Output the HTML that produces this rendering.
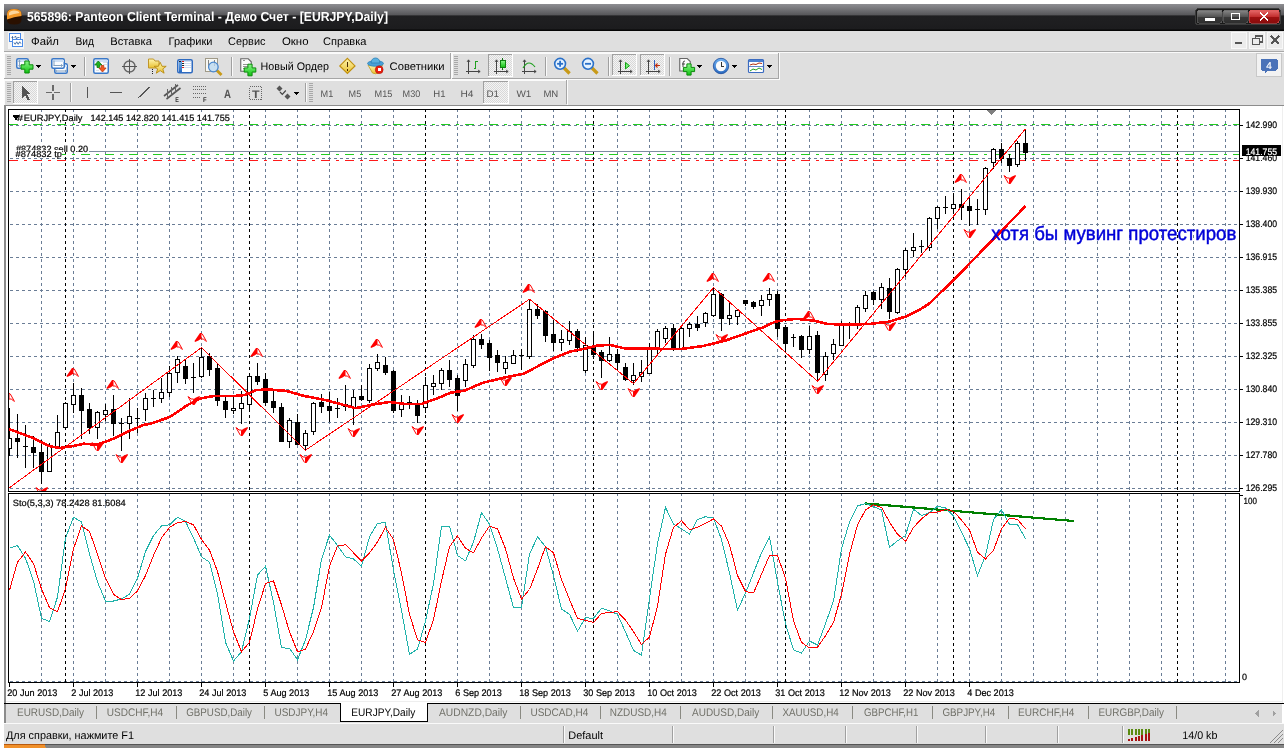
<!DOCTYPE html>
<html><head><meta charset="utf-8"><style>
html,body{margin:0;padding:0;background:#fff;width:1288px;height:748px;overflow:hidden}
svg{display:block;font-family:"Liberation Sans", sans-serif;will-change:transform}
</style></head><body>
<svg width="1288" height="748" viewBox="0 0 1288 748" shape-rendering="crispEdges" text-rendering="geometricPrecision">
<defs><linearGradient id="tg" x1="0" y1="0" x2="0" y2="1"><stop offset="0" stop-color="#8e8e92"/><stop offset="0.42" stop-color="#555558"/><stop offset="0.43" stop-color="#202022"/><stop offset="0.93" stop-color="#1c1c1e"/><stop offset="0.96" stop-color="#050505"/><stop offset="1" stop-color="#050505"/></linearGradient><linearGradient id="bg1" x1="0" y1="0" x2="0" y2="1"><stop offset="0" stop-color="#8a8a8a"/><stop offset="0.5" stop-color="#555"/><stop offset="0.52" stop-color="#3a3a3a"/><stop offset="1" stop-color="#2e2e2e"/></linearGradient><linearGradient id="bgr" x1="0" y1="0" x2="0" y2="1"><stop offset="0" stop-color="#e86b6b"/><stop offset="0.5" stop-color="#c43030"/><stop offset="0.52" stop-color="#a01010"/><stop offset="1" stop-color="#8a0c0c"/></linearGradient><linearGradient id="og" x1="0" y1="0" x2="0" y2="1"><stop offset="0" stop-color="#ffd08a"/><stop offset="0.55" stop-color="#f08a10"/><stop offset="0.56" stop-color="#3a1a00"/><stop offset="1" stop-color="#1a0a00"/></linearGradient><pattern id="chk" width="2" height="2" patternUnits="userSpaceOnUse"><rect width="2" height="2" fill="#f4f4f4"/><rect width="1" height="1" fill="#d8d8d8"/><rect x="1" y="1" width="1" height="1" fill="#d8d8d8"/></pattern></defs>
<rect x="4" y="4" width="1280" height="27" fill="url(#tg)" />
<g shape-rendering="auto"><path d="M7 14 Q7 9 14 9 Q21.5 9 21.5 14 V20 Q21.5 24.5 14 24.5 Q7 24.5 7 20 z" fill="#2a1000"/><path d="M7 14 Q7 9 14 9 Q21.5 9 21.5 14 V16 Q14 16.5 7 19.5 z" fill="#f59a2a"/><path d="M9 13 Q10 10.5 14 10.5 Q19 10.5 19.5 13 Q14 13.8 9 15.5 z" fill="#ffe0b0" opacity="0.85"/></g>
<text x="27" y="21" font-size="13" fill="#fff" textLength="361" lengthAdjust="spacingAndGlyphs" font-weight="bold" >565896: Panteon Client Terminal - Демо Счет - [EURJPY,Daily]</text>
<rect x="1195.5" y="8.5" width="85" height="16" rx="3" fill="#1a1a1a" stroke="#3c3c3c"/>
<rect x="1197" y="10" width="25" height="13" rx="2" fill="url(#bg1)" stroke="#666" stroke-width="0.6"/>
<rect x="1223" y="10" width="25" height="13" rx="2" fill="url(#bg1)" stroke="#666" stroke-width="0.6"/>
<rect x="1249" y="10" width="30" height="13" rx="2" fill="url(#bgr)" stroke="#d55" stroke-width="0.6"/>
<rect x="1205" y="18" width="10" height="2.5" fill="#fff" />
<rect x="1231.5" y="13.5" width="8" height="6" fill="none" stroke="#fff" stroke-width="1.6"/>
<path d="M1260 12.5 L1268 20.5 M1268 12.5 L1260 20.5" stroke="#fff" stroke-width="2"/>
<rect x="4" y="31" width="1280" height="20" fill="#dfdfdf" />
<rect x="8" y="32" width="16" height="17" fill="#f5f5f5" />
<rect x="9.5" y="33.5" width="11" height="8" fill="#fff" stroke="#4a8ae8" stroke-width="1"/><path d="M11.5 37.5 h2 M12.5 36 v3 M14.5 37.5 l1 -1.5 l1 3 l1 -1.5 h2" stroke="#3060a0" fill="none" stroke-width="0.8" shape-rendering="auto"/><rect x="12.5" y="39.5" width="10" height="7" fill="#fff" stroke="#4a8ae8" stroke-width="1"/><path d="M14 42.5 l1.2 1.8 l1.5 -2.5 l1.5 2.5 l1.5 -2.5 l1.2 1.8" stroke="#3060a0" fill="none" stroke-width="0.9" shape-rendering="auto"/>
<text x="31" y="45" font-size="11" fill="#000" textLength="28" lengthAdjust="spacingAndGlyphs" >Файл</text>
<text x="75.5" y="45" font-size="11" fill="#000" textLength="18.5" lengthAdjust="spacingAndGlyphs" >Вид</text>
<text x="110.3" y="45" font-size="11" fill="#000" textLength="41.6" lengthAdjust="spacingAndGlyphs" >Вставка</text>
<text x="168.6" y="45" font-size="11" fill="#000" textLength="43.8" lengthAdjust="spacingAndGlyphs" >Графики</text>
<text x="228" y="45" font-size="11" fill="#000" textLength="37.5" lengthAdjust="spacingAndGlyphs" >Сервис</text>
<text x="282" y="45" font-size="11" fill="#000" textLength="26.5" lengthAdjust="spacingAndGlyphs" >Окно</text>
<text x="323" y="45" font-size="11" fill="#000" textLength="43.5" lengthAdjust="spacingAndGlyphs" >Справка</text>
<rect x="1231" y="32" width="16" height="17" fill="#ececec" />
<rect x="1231.5" y="32.5" width="15" height="16" fill="none" stroke="#f8f8f8"/>
<rect x="1249" y="32" width="16" height="17" fill="#ececec" />
<rect x="1249.5" y="32.5" width="15" height="16" fill="none" stroke="#f8f8f8"/>
<rect x="1267" y="32" width="16" height="17" fill="#ececec" />
<rect x="1267.5" y="32.5" width="15" height="16" fill="none" stroke="#f8f8f8"/>
<rect x="1235" y="42" width="7" height="2" fill="#555" />
<rect x="1252.5" y="38.5" width="7" height="6" fill="none" stroke="#555" stroke-width="1.3"/><path d="M1255.5 38.5 v-2.5 h7 v6 h-2.5" fill="none" stroke="#555" stroke-width="1.3"/>
<path d="M1271 36 L1279 44 M1279 36 L1271 44" stroke="#555" stroke-width="2"/>
<line x1="4" y1="51.5" x2="1284" y2="51.5" stroke="#a8a8a8" stroke-width="1" />
<line x1="4" y1="52.5" x2="1284" y2="52.5" stroke="#fafafa" stroke-width="1" />
<rect x="4" y="53" width="1280" height="52" fill="#dfdfdf" />
<rect x="4" y="53" width="448" height="27" fill="#dfdfdf" />
<line x1="4" y1="53.5" x2="452" y2="53.5" stroke="#fbfbfb" stroke-width="1" />
<line x1="4.5" y1="53" x2="4.5" y2="80" stroke="#fbfbfb" stroke-width="1" />
<line x1="4" y1="78.5" x2="452" y2="78.5" stroke="#a6a6a6" stroke-width="1" />
<line x1="4" y1="79.5" x2="452" y2="79.5" stroke="#fbfbfb" stroke-width="1" />
<line x1="450.5" y1="53" x2="450.5" y2="79" stroke="#a6a6a6" stroke-width="1" />
<line x1="451.5" y1="53" x2="451.5" y2="80" stroke="#fbfbfb" stroke-width="1" />
<rect x="452" y="53" width="328" height="27" fill="#dfdfdf" />
<line x1="452" y1="53.5" x2="780" y2="53.5" stroke="#fbfbfb" stroke-width="1" />
<line x1="452.5" y1="53" x2="452.5" y2="80" stroke="#fbfbfb" stroke-width="1" />
<line x1="452" y1="78.5" x2="780" y2="78.5" stroke="#a6a6a6" stroke-width="1" />
<line x1="452" y1="79.5" x2="780" y2="79.5" stroke="#fbfbfb" stroke-width="1" />
<line x1="778.5" y1="53" x2="778.5" y2="79" stroke="#a6a6a6" stroke-width="1" />
<line x1="779.5" y1="53" x2="779.5" y2="80" stroke="#fbfbfb" stroke-width="1" />
<rect x="4" y="80" width="564" height="25" fill="#dfdfdf" />
<line x1="4" y1="80.5" x2="568" y2="80.5" stroke="#fbfbfb" stroke-width="1" />
<line x1="4.5" y1="80" x2="4.5" y2="105" stroke="#fbfbfb" stroke-width="1" />
<line x1="566.5" y1="80" x2="566.5" y2="104" stroke="#a6a6a6" stroke-width="1" />
<line x1="567.5" y1="80" x2="567.5" y2="105" stroke="#fbfbfb" stroke-width="1" />
<rect x="7" y="56" width="4" height="1" fill="#a8a8a8" />
<rect x="7" y="58" width="4" height="1" fill="#a8a8a8" />
<rect x="7" y="60" width="4" height="1" fill="#a8a8a8" />
<rect x="7" y="62" width="4" height="1" fill="#a8a8a8" />
<rect x="7" y="64" width="4" height="1" fill="#a8a8a8" />
<rect x="7" y="66" width="4" height="1" fill="#a8a8a8" />
<rect x="7" y="68" width="4" height="1" fill="#a8a8a8" />
<rect x="7" y="70" width="4" height="1" fill="#a8a8a8" />
<rect x="7" y="72" width="4" height="1" fill="#a8a8a8" />
<rect x="7" y="74" width="4" height="1" fill="#a8a8a8" />
<rect x="454" y="56" width="4" height="1" fill="#a8a8a8" />
<rect x="454" y="58" width="4" height="1" fill="#a8a8a8" />
<rect x="454" y="60" width="4" height="1" fill="#a8a8a8" />
<rect x="454" y="62" width="4" height="1" fill="#a8a8a8" />
<rect x="454" y="64" width="4" height="1" fill="#a8a8a8" />
<rect x="454" y="66" width="4" height="1" fill="#a8a8a8" />
<rect x="454" y="68" width="4" height="1" fill="#a8a8a8" />
<rect x="454" y="70" width="4" height="1" fill="#a8a8a8" />
<rect x="454" y="72" width="4" height="1" fill="#a8a8a8" />
<rect x="454" y="74" width="4" height="1" fill="#a8a8a8" />
<rect x="7" y="83" width="4" height="1" fill="#a8a8a8" />
<rect x="7" y="85" width="4" height="1" fill="#a8a8a8" />
<rect x="7" y="87" width="4" height="1" fill="#a8a8a8" />
<rect x="7" y="89" width="4" height="1" fill="#a8a8a8" />
<rect x="7" y="91" width="4" height="1" fill="#a8a8a8" />
<rect x="7" y="93" width="4" height="1" fill="#a8a8a8" />
<rect x="7" y="95" width="4" height="1" fill="#a8a8a8" />
<rect x="7" y="97" width="4" height="1" fill="#a8a8a8" />
<rect x="7" y="99" width="4" height="1" fill="#a8a8a8" />
<rect x="7" y="101" width="4" height="1" fill="#a8a8a8" />
<rect x="309" y="83" width="4" height="1" fill="#a8a8a8" />
<rect x="309" y="85" width="4" height="1" fill="#a8a8a8" />
<rect x="309" y="87" width="4" height="1" fill="#a8a8a8" />
<rect x="309" y="89" width="4" height="1" fill="#a8a8a8" />
<rect x="309" y="91" width="4" height="1" fill="#a8a8a8" />
<rect x="309" y="93" width="4" height="1" fill="#a8a8a8" />
<rect x="309" y="95" width="4" height="1" fill="#a8a8a8" />
<rect x="309" y="97" width="4" height="1" fill="#a8a8a8" />
<rect x="309" y="99" width="4" height="1" fill="#a8a8a8" />
<rect x="309" y="101" width="4" height="1" fill="#a8a8a8" />
<defs><linearGradient id="gy" x1="0" y1="0" x2="0" y2="1"><stop offset="0" stop-color="#fff6b0"/><stop offset="1" stop-color="#e8c030"/></linearGradient><linearGradient id="gb" x1="0" y1="0" x2="0" y2="1"><stop offset="0" stop-color="#6fb0f0"/><stop offset="1" stop-color="#2a6ac0"/></linearGradient><linearGradient id="gg" x1="0" y1="0" x2="0" y2="1"><stop offset="0" stop-color="#8af88a"/><stop offset="1" stop-color="#10c010"/></linearGradient></defs>
<rect x="16.75" y="58.75" width="11.5" height="9.5" rx="1.5" fill="#fafcff" stroke="#3a78c8" stroke-width="1.5" shape-rendering="auto"/><rect x="17.5" y="59.5" width="10" height="2" fill="#cfe0f6"/>
<path d="M19.5 60.5 v6 M18.3 61.5 l1.2 -1.2 l1.2 1.2 M18.3 65.5 l1.2 1.2 l1.2 -1.2" stroke="#7a98b8" fill="none" stroke-width="0.9" shape-rendering="auto"/>
<path d="M24.8 61h4.4v3.8h3.8v4.4h-3.8v3.8h-4.4v-3.8h-3.8v-4.4h3.8z" fill="url(#gg)" stroke="#0a8a0a" stroke-width="1" shape-rendering="auto"/>
<path d="M36 65 h5 l-2.5 3 z" fill="#000"/>
<rect x="54.75" y="63.75" width="12.5" height="9.5" rx="1.5" fill="#fafcff" stroke="#3a78c8" stroke-width="1.5" shape-rendering="auto"/><rect x="55.5" y="64.5" width="11" height="2" fill="#cfe0f6"/>
<rect x="51.75" y="58.75" width="12.5" height="9.5" rx="1.5" fill="#fafcff" stroke="#3a78c8" stroke-width="1.5" shape-rendering="auto"/><rect x="52.5" y="59.5" width="11" height="2" fill="#cfe0f6"/>
<path d="M54 60.5 v5 M53.5 65.5 h9 M61 64.3 l1.5 1.2 l-1.5 1.2 M57 71 h9 M57 70 l-1.5 1 l1.5 1 M65 70 l1.5 1 l-1.5 1" stroke="#7a98b8" fill="none" stroke-width="0.9" shape-rendering="auto"/>
<path d="M71 65 h5 l-2.5 3 z" fill="#000"/>
<line x1="84.5" y1="57" x2="84.5" y2="76" stroke="#a0a0a0" stroke-width="1" />
<line x1="85.5" y1="57" x2="85.5" y2="76" stroke="#fafafa" stroke-width="1" />
<rect x="93.75" y="58.75" width="14.5" height="14.5" rx="1.5" fill="#fafcff" stroke="#3a78c8" stroke-width="1.5" shape-rendering="auto"/><rect x="94.5" y="59.5" width="13" height="2" fill="#cfe0f6"/>
<path d="M98.3 61 l-3.6 4 h2.3 v2.5 h2.6 v-2.5 h2.3 z" fill="#20b020" stroke="#0a7a0a" stroke-width="0.8" shape-rendering="auto"/><path d="M102.5 72 l3.6 -4 h-2.3 v-2.5 h-2.6 v2.5 h-2.3 z" fill="#f05a20" stroke="#c03a10" stroke-width="0.8" shape-rendering="auto"/><path d="M103 62 h4 M103 64 h4 M96 70 h3" stroke="#d0d8e0" stroke-width="0.8"/>
<circle cx="129.5" cy="66.5" r="5.5" fill="none" stroke="#666" stroke-width="1.4" shape-rendering="auto"/><path d="M129.5 59 v15 M122 66.5 h15" stroke="#555" stroke-width="1.1"/>
<path d="M148.5 59 h5 l1.5 2 h4 v7 h-10.5 z" fill="url(#gy)" stroke="#c0962a" stroke-width="1" shape-rendering="auto"/><path d="M160.2 62.3 l1.8 4 h4.2 l-3.4 2.6 l1.3 4.3 l-3.9 -2.6 l-3.9 2.6 l1.3 -4.3 l-3.4 -2.6 h4.2 z" fill="url(#gy)" stroke="#b88a10" stroke-width="0.9" shape-rendering="auto"/><path d="M152.5 69 v5" stroke="#222" stroke-width="1" stroke-dasharray="1 1"/>
<rect x="177.75" y="59.75" width="14.5" height="13" rx="1.5" fill="#fff" stroke="#2e6ac0" stroke-width="1.5" shape-rendering="auto"/><rect x="178.5" y="60.5" width="3" height="11.5" fill="url(#gb)"/><path d="M183 61.5 h8 M183 63.5 h8 M183 65.5 h8 M183 67.5 h8" stroke="#c0d4f0" stroke-width="0.8"/><path d="M182 61.5 h1.5 M182 67.5 h1.5" stroke="#e02020" stroke-width="1.2"/><path d="M182 63.5 h1.5 M182 65.5 h1.5 M179 61.5 h1.5" stroke="#222" stroke-width="1.2"/>
<rect x="205.5" y="58.5" width="12" height="13" fill="#f8f8f4" stroke="#a09a88"/><path d="M208 60 v8 M214.5 60 v6" stroke="#777" stroke-width="0.9"/><path d="M216.5 70 l5 5" stroke="#c89a18" stroke-width="2.8" shape-rendering="auto"/><circle cx="213.4" cy="67" r="4.8" fill="#bcd8f0" fill-opacity="0.8" stroke="#4a88d0" stroke-width="1.2" shape-rendering="auto"/>
<line x1="231.5" y1="57" x2="231.5" y2="76" stroke="#a0a0a0" stroke-width="1" />
<line x1="232.5" y1="57" x2="232.5" y2="76" stroke="#fafafa" stroke-width="1" />
<path d="M240.75 58.75 h7.5 l3 3 v9.5 h-10.5 z" fill="#fbfbfb" stroke="#666" stroke-width="1.1" shape-rendering="auto"/><path d="M242.5 60.8 h2 M242.5 64.5 h5.5 M242.5 66.3 h5 M242.5 68.1 h3" stroke="#888" stroke-width="0.9"/>
<path d="M247.9 64.2h4.2v3.6999999999999997h3.6999999999999997v4.2h-3.6999999999999997v3.6999999999999997h-4.2v-3.6999999999999997h-3.6999999999999997v-4.2h3.6999999999999997z" fill="url(#gg)" stroke="#0a8a0a" stroke-width="1" shape-rendering="auto"/>
<text x="260.6" y="69.5" font-size="11" fill="#000" textLength="68.4" lengthAdjust="spacingAndGlyphs" >Новый Ордер</text>
<path d="M347.4 58.3 l7.6 7.6 l-7.6 7.6 l-7.6 -7.6 z" fill="url(#gy)" stroke="#c09010" stroke-width="1.2" shape-rendering="auto"/><path d="M347.4 61.8 v5.5 M347.4 69 v1.6" stroke="#4a2a00" stroke-width="1.6"/>
<path d="M368 65 h14.5 l-4 8 q-3 1.5 -6 0 z" fill="url(#gy)" stroke="#c09a20" stroke-width="0.8" shape-rendering="auto"/><ellipse cx="375.5" cy="63.5" rx="8" ry="2.8" fill="#4aa0d8" stroke="#2a80b8" stroke-width="0.8" shape-rendering="auto"/><path d="M371 63 q0.5 -5 4.5 -5 q4 0 4.5 5 z" fill="#5ab0e0" stroke="#2a80b8" stroke-width="0.8" shape-rendering="auto"/><circle cx="379.2" cy="69.7" r="3.9" fill="#e82010" stroke="#b01008" stroke-width="0.6" shape-rendering="auto"/><rect x="377.6" y="68.1" width="3.2" height="3.2" fill="#fff"/>
<text x="389.6" y="69.5" font-size="11" fill="#000" textLength="54.9" lengthAdjust="spacingAndGlyphs" >Советники</text>
<path d="M468.5 60 V73.5 M466 71.5 H480" stroke="#444" stroke-width="1" fill="none"/><path d="M467 62 l1.5 -2.2 l1.5 2.2 M478 70 l2.2 1.5 l-2.2 1.5" stroke="#444" fill="none" stroke-width="0.9" shape-rendering="auto"/>
<path d="M476 61.5 h1.5 M475.5 61 v7.5 M473.5 68.5 h2" stroke="#20a020" stroke-width="1.3"/>
<rect x="488" y="54" width="25" height="23" fill="url(#chk)" />
<rect x="488.5" y="54.5" width="24" height="22" fill="none" stroke="#a0a0a0"/>
<line x1="488" y1="76.5" x2="513" y2="76.5" stroke="#fff" stroke-width="1" />
<line x1="512.5" y1="54" x2="512.5" y2="77" stroke="#fff" stroke-width="1" />
<path d="M496.5 60 V73.5 M494 71.5 H508" stroke="#444" stroke-width="1" fill="none"/><path d="M495 62 l1.5 -2.2 l1.5 2.2 M506 70 l2.2 1.5 l-2.2 1.5" stroke="#444" fill="none" stroke-width="0.9" shape-rendering="auto"/>
<path d="M502.7 57.5 v12" stroke="#107010" stroke-width="1"/><rect x="500.5" y="60.5" width="4.5" height="7" fill="url(#gg)" stroke="#108010"/>
<path d="M524.5 60 V73.5 M522 71.5 H536" stroke="#444" stroke-width="1" fill="none"/><path d="M523 62 l1.5 -2.2 l1.5 2.2 M534 70 l2.2 1.5 l-2.2 1.5" stroke="#444" fill="none" stroke-width="0.9" shape-rendering="auto"/>
<path d="M523 68 q3 -5 6 -5 q3 0 6 4" stroke="#20a020" fill="none" stroke-width="1.2" shape-rendering="auto"/>
<line x1="545.5" y1="57" x2="545.5" y2="76" stroke="#a0a0a0" stroke-width="1" />
<line x1="546.5" y1="57" x2="546.5" y2="76" stroke="#fafafa" stroke-width="1" />
<path d="M564.1 68 l5.5 5.5" stroke="#c89a18" stroke-width="3.2" shape-rendering="auto"/><circle cx="560.1" cy="63.8" r="5.4" fill="#e4f2ff" stroke="#2a70c8" stroke-width="1.6" shape-rendering="auto"/><path d="M557.1 63.8 h6" stroke="#2a70c8" stroke-width="1.8" shape-rendering="auto"/>
<path d="M560.1 60.8 v6" stroke="#2a70c8" stroke-width="1.8" shape-rendering="auto"/>
<path d="M592 68 l5.5 5.5" stroke="#c89a18" stroke-width="3.2" shape-rendering="auto"/><circle cx="588" cy="63.8" r="5.4" fill="#e4f2ff" stroke="#2a70c8" stroke-width="1.6" shape-rendering="auto"/><path d="M585 63.8 h6" stroke="#2a70c8" stroke-width="1.8" shape-rendering="auto"/>
<line x1="608.5" y1="57" x2="608.5" y2="76" stroke="#a0a0a0" stroke-width="1" />
<line x1="609.5" y1="57" x2="609.5" y2="76" stroke="#fafafa" stroke-width="1" />
<rect x="612" y="54" width="25" height="22" fill="url(#chk)" />
<rect x="612.5" y="54.5" width="24" height="21" fill="none" stroke="#a0a0a0"/>
<line x1="612" y1="75.5" x2="637" y2="75.5" stroke="#fff" stroke-width="1" />
<line x1="636.5" y1="54" x2="636.5" y2="76" stroke="#fff" stroke-width="1" />
<path d="M620.5 60 V73.5 M618 71.5 H632" stroke="#444" stroke-width="1" fill="none"/><path d="M619 62 l1.5 -2.2 l1.5 2.2 M630 70 l2.2 1.5 l-2.2 1.5" stroke="#444" fill="none" stroke-width="0.9" shape-rendering="auto"/>
<path d="M625.5 62.5 l4 3.2 l-4 3.2 z" fill="#7af07a" stroke="#10a010" stroke-width="1" shape-rendering="auto"/>
<rect x="640" y="54" width="25" height="22" fill="url(#chk)" />
<rect x="640.5" y="54.5" width="24" height="21" fill="none" stroke="#a0a0a0"/>
<line x1="640" y1="75.5" x2="665" y2="75.5" stroke="#fff" stroke-width="1" />
<line x1="664.5" y1="54" x2="664.5" y2="76" stroke="#fff" stroke-width="1" />
<path d="M648.5 60 V73.5 M646 71.5 H660" stroke="#444" stroke-width="1" fill="none"/><path d="M647 62 l1.5 -2.2 l1.5 2.2 M658 70 l2.2 1.5 l-2.2 1.5" stroke="#444" fill="none" stroke-width="0.9" shape-rendering="auto"/>
<path d="M654.5 60 v10" stroke="#3060c0" stroke-width="1.2"/><path d="M660 65.5 h-4 M657.5 63.5 l-2 2 l2 2" stroke="#c03010" stroke-width="1.2" fill="none" shape-rendering="auto"/>
<line x1="669.5" y1="57" x2="669.5" y2="76" stroke="#a0a0a0" stroke-width="1" />
<line x1="670.5" y1="57" x2="670.5" y2="76" stroke="#fafafa" stroke-width="1" />
<path d="M679.75 58.5 h7.5 l3 3 v9.5 h-10.5 z" fill="#fbfbfb" stroke="#666" stroke-width="1.1" shape-rendering="auto"/><path d="M683 67 v-4 q0 -2 2 -2 M682 64 h3" stroke="#333" fill="none" stroke-width="0.9" shape-rendering="auto"/>
<path d="M686.9 63.9h4.2v3.4999999999999996h3.4999999999999996v4.2h-3.4999999999999996v3.4999999999999996h-4.2v-3.4999999999999996h-3.4999999999999996v-4.2h3.4999999999999996z" fill="url(#gg)" stroke="#0a8a0a" stroke-width="1" shape-rendering="auto"/>
<path d="M697 65 h5 l-2.5 3 z" fill="#000"/>
<circle cx="721" cy="66" r="7.7" fill="url(#gb)" stroke="#1a4a9a" stroke-width="0.8" shape-rendering="auto"/><circle cx="721" cy="66" r="5.2" fill="#fafafa" shape-rendering="auto"/><path d="M721 62.3 v3.7 h3" stroke="#333" stroke-width="1" fill="none"/>
<path d="M732 65 h5 l-2.5 3 z" fill="#000"/>
<rect x="748.5" y="59.5" width="15" height="13" rx="1" fill="#fff" stroke="#3c6cc0" stroke-width="1.2" shape-rendering="auto"/><rect x="749" y="60" width="14" height="2" fill="#4a80d0"/><path d="M749 66.5 h14" stroke="#3c6cc0" stroke-width="0.8"/><path d="M750 65 l3 -1 l3 0.5 l3 -1.5 l3 0.5" stroke="#b03010" fill="none" shape-rendering="auto"/><path d="M750 71 l3 -2 l3 1 l3 -2 l3 1.5" stroke="#20a020" fill="none" shape-rendering="auto"/>
<path d="M767 65 h5 l-2.5 3 z" fill="#000"/>
<rect x="1256" y="53" width="26" height="24" fill="#f2f2f2" />
<rect x="1256.5" y="53.5" width="25" height="23" fill="none" stroke="#c8c8c8"/>
<path d="M1262 58.5 h14 q1.5 0 1.5 1.5 v9 q0 1.5 -1.5 1.5 h-8 l-3 3 v-3 h-3 q-1.5 0 -1.5 -1.5 v-9 q0 -1.5 1.5 -1.5 z" fill="#4a72b8"/>
<text x="1269" y="68.5" font-size="10" fill="#fff" text-anchor="middle" stroke="#fff" stroke-width="0.2" >4</text>
<rect x="13" y="81" width="25" height="23" fill="url(#chk)" />
<rect x="13.5" y="81.5" width="24" height="22" fill="none" stroke="#a0a0a0"/>
<line x1="13" y1="103.5" x2="38" y2="103.5" stroke="#fff" stroke-width="1" />
<line x1="37.5" y1="81" x2="37.5" y2="104" stroke="#fff" stroke-width="1" />
<path d="M22 86 v12 l3 -3 l3 5.5 l2 -1 l-3 -5.5 h4 z" fill="#555"/>
<path d="M53 85 v6 M53 94 v6 M46 92.5 h6 M54 92.5 h6" stroke="#6a6a6a" stroke-width="1.2"/>
<line x1="70.5" y1="83" x2="70.5" y2="102" stroke="#a0a0a0" stroke-width="1" />
<line x1="71.5" y1="83" x2="71.5" y2="102" stroke="#fafafa" stroke-width="1" />
<line x1="87.5" y1="87" x2="87.5" y2="98" stroke="#555" stroke-width="1.3" />
<line x1="110" y1="92.5" x2="122" y2="92.5" stroke="#555" stroke-width="1.3" />
<line x1="138" y1="98" x2="150" y2="87" stroke="#555" stroke-width="1.3" />
<path d="M164 96 L178 85 M166.5 99 L180.5 88" stroke="#555" stroke-width="1.6" shape-rendering="auto"/><path d="M167 89 v8 M171 87 v8 M175 84 v8" stroke="#666" stroke-width="1"/>
<text x="175.2" y="101.5" font-size="7" fill="#333" textLength="3.6" lengthAdjust="spacingAndGlyphs" font-weight="bold" >E</text>
<path d="M193 86.5 h13" stroke="#666" stroke-width="1" stroke-dasharray="1 1"/>
<path d="M193 89.5 h13" stroke="#666" stroke-width="1" stroke-dasharray="1 1"/>
<path d="M193 93.5 h13" stroke="#666" stroke-width="1" stroke-dasharray="1 1"/>
<path d="M193 97.5 h13" stroke="#666" stroke-width="1" stroke-dasharray="1 1"/>
<rect x="200" y="96" width="7" height="6" fill="#dfdfdf" />
<text x="203" y="101.9" font-size="7" fill="#333" textLength="3.6" lengthAdjust="spacingAndGlyphs" font-weight="bold" >F</text>
<text x="224.1" y="98" font-size="12" fill="#555" textLength="7" lengthAdjust="spacingAndGlyphs" font-weight="bold" >A</text>
<rect x="249.5" y="86.5" width="12" height="13" fill="none" stroke="#666" stroke-dasharray="1 1"/>
<text x="252" y="97.5" font-size="11" fill="#555" textLength="7.6" lengthAdjust="spacingAndGlyphs" font-weight="bold" >T</text>
<path d="M279.5 85.5 l3 3 l-3 3 l-3 -3 z M287.5 93.5 l3 3 l-3 3 l-3 -3 z" fill="#555" shape-rendering="auto"/><path d="M280 92 l2.3 2.3 l3.5 -3.8" stroke="#444" stroke-width="1.2" fill="none" shape-rendering="auto"/>
<path d="M294 92 h5 l-2.5 3 z" fill="#000"/>
<line x1="305.5" y1="83" x2="305.5" y2="102" stroke="#a0a0a0" stroke-width="1" />
<line x1="306.5" y1="83" x2="306.5" y2="102" stroke="#fafafa" stroke-width="1" />
<text x="320.6" y="96.6" font-size="9.5" fill="#555" textLength="12.7" lengthAdjust="spacingAndGlyphs" font-weight="normal" >M1</text>
<text x="348.6" y="96.6" font-size="9.5" fill="#555" textLength="12.6" lengthAdjust="spacingAndGlyphs" font-weight="normal" >M5</text>
<text x="374.6" y="96.6" font-size="9.5" fill="#555" textLength="17.8" lengthAdjust="spacingAndGlyphs" font-weight="normal" >M15</text>
<text x="402.6" y="96.6" font-size="9.5" fill="#555" textLength="17.7" lengthAdjust="spacingAndGlyphs" font-weight="normal" >M30</text>
<text x="433.3" y="96.6" font-size="9.5" fill="#555" textLength="12.2" lengthAdjust="spacingAndGlyphs" font-weight="normal" >H1</text>
<text x="460.5" y="96.6" font-size="9.5" fill="#555" textLength="13" lengthAdjust="spacingAndGlyphs" font-weight="normal" >H4</text>
<rect x="483" y="81" width="26" height="23" fill="url(#chk)" />
<rect x="483.5" y="81.5" width="25" height="22" fill="none" stroke="#a0a0a0"/>
<line x1="483" y1="103.5" x2="509" y2="103.5" stroke="#fff" stroke-width="1" />
<line x1="508.5" y1="81" x2="508.5" y2="104" stroke="#fff" stroke-width="1" />
<text x="486.5" y="96.6" font-size="9.5" fill="#555" textLength="12.5" lengthAdjust="spacingAndGlyphs" font-weight="normal" >D1</text>
<text x="516.4" y="96.6" font-size="9.5" fill="#555" textLength="14.9" lengthAdjust="spacingAndGlyphs" font-weight="normal" >W1</text>
<text x="543.4" y="96.6" font-size="9.5" fill="#555" textLength="14.9" lengthAdjust="spacingAndGlyphs" font-weight="normal" >MN</text>
<rect x="4" y="105" width="1280" height="598" fill="#fff" />
<line x1="4" y1="105.5" x2="1284" y2="105.5" stroke="#8c8c8c" stroke-width="1" />
<rect x="4" y="106" width="2" height="597" fill="#8c8c8c" />
<rect x="1282" y="106" width="1" height="597" fill="#efefef" />
<clipPath id="cm"><rect x="9" y="110" width="1230" height="381"/></clipPath>
<clipPath id="cs"><rect x="9" y="494" width="1230" height="188"/></clipPath>
<path d="M41.5 109V491M41.5 493V682M73.5 109V491M73.5 493V682M105.5 109V491M105.5 493V682M137.5 109V491M137.5 493V682M169.5 109V491M169.5 493V682M201.5 109V491M201.5 493V682M233.5 109V491M233.5 493V682M265.5 109V491M265.5 493V682M297.5 109V491M297.5 493V682M329.5 109V491M329.5 493V682M361.5 109V491M361.5 493V682M393.5 109V491M393.5 493V682M425.5 109V491M425.5 493V682M457.5 109V491M457.5 493V682M489.5 109V491M489.5 493V682M521.5 109V491M521.5 493V682M553.5 109V491M553.5 493V682M585.5 109V491M585.5 493V682M617.5 109V491M617.5 493V682M649.5 109V491M649.5 493V682M681.5 109V491M681.5 493V682M713.5 109V491M713.5 493V682M745.5 109V491M745.5 493V682M777.5 109V491M777.5 493V682M809.5 109V491M809.5 493V682M841.5 109V491M841.5 493V682M873.5 109V491M873.5 493V682M905.5 109V491M905.5 493V682M937.5 109V491M937.5 493V682M969.5 109V491M969.5 493V682M1001.5 109V491M1001.5 493V682M1033.5 109V491M1033.5 493V682M1065.5 109V491M1065.5 493V682M1097.5 109V491M1097.5 493V682M1129.5 109V491M1129.5 493V682M1161.5 109V491M1161.5 493V682M1193.5 109V491M1193.5 493V682M1225.5 109V491M1225.5 493V682" stroke="#6a7d96" stroke-width="1" stroke-dasharray="3 3" fill="none"/>
<path d="M10 125.5H1239M10 158.5H1239M10 191.5H1239M10 224.5H1239M10 257.5H1239M10 290.5H1239M10 323.5H1239M10 356.5H1239M10 389.5H1239M10 422.5H1239M10 455.5H1239M10 488.5H1239M10 681.5H1239" stroke="#6a7d96" stroke-width="1" stroke-dasharray="3 3" fill="none"/>
<path d="M65.5 109V491M65.5 493V682M249.5 109V491M249.5 493V682M425.5 109V491M425.5 493V682M593.5 109V491M593.5 493V682M785.5 109V491M785.5 493V682M953.5 109V491M953.5 493V682M1177.5 109V491M1177.5 493V682" stroke="#000" stroke-width="1" stroke-dasharray="3 3" fill="none"/>
<path d="M9 124.5H1239M9 154.5H1239" stroke="#22cc22" stroke-width="1" stroke-dasharray="9 6 3 6" fill="none"/>
<path d="M9 160.5H1239" stroke="#ff1a1a" stroke-width="1" stroke-dasharray="9 6 3 6" fill="none"/>
<line x1="89" y1="151.5" x2="1239" y2="151.5" stroke="#7d8ca0" stroke-width="1" />
<path d="M987 110 h9.5 l-4.75 5 z" fill="#808080"/>
<g clip-path="url(#cm)">
<path d="M9.5 408V456M17.5 414V458M25.5 425V468M33.5 436V468M41.5 440V484M49.5 443V472M57.5 415V448M65.5 402V430M73.5 383V413M81.5 388V439M89.5 403V434M97.5 411V439M105.5 404V421M113.5 395V436M121.5 418V451M129.5 398V439M137.5 408V433M145.5 393V421M153.5 390V407M161.5 378V403M169.5 366V397M177.5 356V383M185.5 360V384M193.5 363V393M201.5 348V378M209.5 353V376M217.5 364V406M225.5 395V418M233.5 396V414M241.5 391V424M249.5 373V411M257.5 363V385M265.5 373V406M273.5 391V413M281.5 403V442M289.5 418V448M297.5 414V445M305.5 430V451M313.5 402V435M321.5 394V413M329.5 392V422M337.5 398V418M345.5 385V411M353.5 390V425M361.5 385V401M369.5 364V403M377.5 354V371M385.5 357V375M393.5 370V413M401.5 395V417M409.5 396V409M417.5 400V423M425.5 377V413M433.5 375V395M441.5 368V390M449.5 360V387M457.5 375V411M465.5 359V387M473.5 335V368M481.5 334V349M489.5 340V371M497.5 350V372M505.5 356V374M513.5 350V364M521.5 349V370M529.5 299V359M537.5 304V319M545.5 310V342M553.5 320V351M561.5 330V351M569.5 321V345M577.5 329V352M585.5 337V373M593.5 331V359M601.5 350V378M609.5 337V362M617.5 349V370M625.5 363V381M633.5 363V385M641.5 360V382M649.5 343V374M657.5 329V355M665.5 326V343M673.5 324V351M681.5 326V349M689.5 322V337M697.5 316V331M705.5 312V327M713.5 288V317M721.5 293V331M729.5 303V325M737.5 310V325M745.5 300V306M753.5 301V309M761.5 295V316M769.5 288V306M777.5 291V337M785.5 325V353M793.5 334V347M801.5 335V358M809.5 326V354M817.5 331V382M825.5 352V381M833.5 339V360M841.5 321V346M849.5 322V339M857.5 305V329M865.5 291V312M873.5 291V305M881.5 283V309M889.5 278V319M897.5 268V314M905.5 248V277M913.5 233V257M921.5 240V253M929.5 217V251M937.5 206V229M945.5 196V214M953.5 193V214M961.5 189V220M969.5 198V226M977.5 199V225M985.5 167V215M993.5 148V169M1001.5 143V163M1009.5 154V172M1017.5 141V167M1025.5 129V161" stroke="#000" stroke-width="1" fill="none"/>
<path d="M7.5 438.5h4V448.5h-4zM47.5 446.5h4V471.5h-4zM55.5 432.5h4V446.5h-4zM63.5 403.5h4V427.5h-4zM71.5 395.5h4V404.5h-4zM95.5 412.5h4V427.5h-4zM103.5 410.5h4V414.5h-4zM127.5 416.5h4V423.5h-4zM143.5 398.5h4V409.5h-4zM159.5 392.5h4V398.5h-4zM167.5 373.5h4V392.5h-4zM175.5 359.5h4V372.5h-4zM199.5 357.5h4V376.5h-4zM231.5 408.5h4V410.5h-4zM239.5 403.5h4V408.5h-4zM247.5 376.5h4V404.5h-4zM287.5 420.5h4V441.5h-4zM303.5 433.5h4V445.5h-4zM311.5 403.5h4V431.5h-4zM351.5 397.5h4V407.5h-4zM367.5 368.5h4V400.5h-4zM375.5 362.5h4V368.5h-4zM399.5 402.5h4V409.5h-4zM423.5 385.5h4V407.5h-4zM431.5 383.5h4V386.5h-4zM439.5 370.5h4V383.5h-4zM463.5 364.5h4V380.5h-4zM471.5 339.5h4V365.5h-4zM503.5 362.5h4V368.5h-4zM511.5 355.5h4V363.5h-4zM527.5 309.5h4V356.5h-4zM559.5 339.5h4V342.5h-4zM567.5 331.5h4V340.5h-4zM583.5 345.5h4V370.5h-4zM607.5 354.5h4V360.5h-4zM631.5 375.5h4V380.5h-4zM639.5 372.5h4V376.5h-4zM647.5 349.5h4V373.5h-4zM655.5 331.5h4V349.5h-4zM663.5 328.5h4V338.5h-4zM679.5 328.5h4V348.5h-4zM687.5 324.5h4V328.5h-4zM703.5 313.5h4V322.5h-4zM711.5 294.5h4V315.5h-4zM727.5 315.5h4V318.5h-4zM735.5 310.5h4V316.5h-4zM759.5 300.5h4V305.5h-4zM767.5 294.5h4V299.5h-4zM807.5 336.5h4V349.5h-4zM823.5 356.5h4V374.5h-4zM831.5 344.5h4V353.5h-4zM839.5 325.5h4V345.5h-4zM855.5 307.5h4V325.5h-4zM863.5 295.5h4V308.5h-4zM879.5 287.5h4V299.5h-4zM895.5 269.5h4V312.5h-4zM903.5 250.5h4V269.5h-4zM911.5 247.5h4V250.5h-4zM927.5 218.5h4V247.5h-4zM935.5 207.5h4V218.5h-4zM951.5 204.5h4V208.5h-4zM983.5 168.5h4V209.5h-4zM991.5 149.5h4V162.5h-4zM1015.5 143.5h4V164.5h-4z" stroke="#000" stroke-width="1" fill="#fff"/>
<path d="M15 438h5V442h-5zM31 447h5V453h-5zM39 452h5V472h-5zM79 395h5V411h-5zM87 409h5V428h-5zM111 409h5V424h-5zM183 366h5V379h-5zM207 356h5V370h-5zM215 368h5V401h-5zM223 401h5V410h-5zM255 376h5V382h-5zM263 379h5V403h-5zM271 401h5V408h-5zM279 407h5V442h-5zM295 422h5V445h-5zM319 402h5V407h-5zM327 406h5V411h-5zM343 404h5V407h-5zM359 396h5V400h-5zM383 365h5V373h-5zM391 371h5V411h-5zM407 402h5V405h-5zM415 403h5V416h-5zM447 370h5V380h-5zM455 378h5V396h-5zM479 339h5V345h-5zM487 343h5V358h-5zM495 355h5V363h-5zM535 309h5V316h-5zM543 311h5V336h-5zM551 334h5V343h-5zM575 331h5V348h-5zM591 346h5V355h-5zM599 352h5V361h-5zM615 354h5V363h-5zM623 367h5V380h-5zM671 328h5V349h-5zM695 324h5V328h-5zM719 294h5V319h-5zM743 300h5V304h-5zM751 302h5V307h-5zM775 294h5V329h-5zM783 327h5V344h-5zM799 336h5V350h-5zM815 335h5V373h-5zM871 292h5V300h-5zM887 288h5V312h-5zM959 204h5V208h-5zM967 206h5V211h-5zM999 149h5V159h-5zM1007 158h5V166h-5zM1023 143h5V153h-5z" fill="#000"/>
<path d="M23 446.5H28M119 423.5H124M135 418.5H140M151 398.5H156M191 377.5H196M335 408.5H340M519 355.5H524M791 337.5H796M847 324.5H852M919 246.5H924M943 207.5H948M975 209.5H980" stroke="#000" stroke-width="1" fill="none"/>
<polyline points="9,429 33,438 48.6,446 59.6,448 73,446 84,443.7 97,444.8 112.6,439 128,431.5 143.5,425 150,423.8 169.9,417 187.5,405 200.8,398.4 214,396 234,396 245,395 256,390 269,389.5 286.9,391 304.5,396 327,400.4 355.8,408.2 371,404.9 389,402 404,403.8 422,403.8 437.5,398.2 450.7,392.7 465,390.5 482,383 504,377.6 524,373.6 539.5,365.4 555,357.7 570.4,351.5 583.6,348.9 596.9,345.6 610,344.9 626,348.7 648,348.7 681,349 703,346 725.4,340.6 747.5,332.8 760.7,328.4 775,321.8 783,320.2 796.5,318.9 814,320.6 827.4,324 847,324.6 869,324 889,321.7 906.9,316.2 920,309.6 930,303 958.4,275 1025.7,206" fill="none" stroke="#ff0000" stroke-width="2.6" stroke-linejoin="round"/>
<polyline points="9,488 201.5,347.6 305.5,450.2 529.5,299.2 633.5,383.6 713.5,287.6 817.5,381.3 1025.5,128.8" fill="none" stroke="#ff0000" stroke-width="1"/>
<path d="M10.2 393.8L14.5 401.5M9 399L11.5 399L14 401.5M74.2 368.8L78.5 376.5M73 374L75.5 374L78 376.5M114.2 380.8L118.5 388.5M113 386L115.5 386L118 388.5M178.2 341.8L182.5 349.5M177 347L179.5 347L182 349.5M202.2 333.8L206.5 341.5M201 339L203.5 339L206 341.5M258.2 348.8L262.5 356.5M257 354L259.5 354L262 356.5M346.2 370.8L350.5 378.5M345 376L347.5 376L350 378.5M378.2 339.8L382.5 347.5M377 345L379.5 345L382 347.5M482.2 319.8L486.5 327.5M481 325L483.5 325L486 327.5M530.2 284.8L534.5 292.5M529 290L531.5 290L534 292.5M714.2 273.8L718.5 281.5M713 279L715.5 279L718 281.5M770.2 273.8L774.5 281.5M769 279L771.5 279L774 281.5M810.2 311.8L814.5 319.5M809 317L811.5 317L814 319.5M962.2 174.8L966.5 182.5M961 180L963.5 180L966 182.5M40.3 495.2L36.0 487.5M41.5 490L39.0 490L36.5 487.5M96.3 450.2L92.0 442.5M97.5 445L95.0 445L92.5 442.5M120.3 462.2L116.0 454.5M121.5 457L119.0 457L116.5 454.5M192.3 404.2L188.0 396.5M193.5 399L191.0 399L188.5 396.5M240.3 435.2L236.0 427.5M241.5 430L239.0 430L236.5 427.5M304.3 462.2L300.0 454.5M305.5 457L303.0 457L300.5 454.5M352.3 436.2L348.0 428.5M353.5 431L351.0 431L348.5 428.5M416.3 434.2L412.0 426.5M417.5 429L415.0 429L412.5 426.5M456.3 422.2L452.0 414.5M457.5 417L455.0 417L452.5 414.5M504.3 385.2L500.0 377.5M505.5 380L503.0 380L500.5 377.5M600.3 389.2L596.0 381.5M601.5 384L599.0 384L596.5 381.5M632.3 396.2L628.0 388.5M633.5 391L631.0 391L628.5 388.5M720.3 342.2L716.0 334.5M721.5 337L719.0 337L716.5 334.5M816.3 393.2L812.0 385.5M817.5 388L815.0 388L812.5 385.5M888.3 330.2L884.0 322.5M889.5 325L887.0 325L884.5 322.5M968.3 237.2L964.0 229.5M969.5 232L967.0 232L964.5 229.5M1008.3 183.2L1004.0 175.5M1009.5 178L1007.0 178L1004.5 175.5" fill="none" stroke="#ff0000" stroke-width="1" shape-rendering="auto"/>
<path d="M8 393L10 393L9.5 394.5V398.5L6.5 400.5L3 402L2.5 401zM72 368L74 368L73.5 369.5V373.5L70.5 375.5L67 377L66.5 376zM112 380L114 380L113.5 381.5V385.5L110.5 387.5L107 389L106.5 388zM176 341L178 341L177.5 342.5V346.5L174.5 348.5L171 350L170.5 349zM200 333L202 333L201.5 334.5V338.5L198.5 340.5L195 342L194.5 341zM256 348L258 348L257.5 349.5V353.5L254.5 355.5L251 357L250.5 356zM344 370L346 370L345.5 371.5V375.5L342.5 377.5L339 379L338.5 378zM376 339L378 339L377.5 340.5V344.5L374.5 346.5L371 348L370.5 347zM480 319L482 319L481.5 320.5V324.5L478.5 326.5L475 328L474.5 327zM528 284L530 284L529.5 285.5V289.5L526.5 291.5L523 293L522.5 292zM712 273L714 273L713.5 274.5V278.5L710.5 280.5L707 282L706.5 281zM768 273L770 273L769.5 274.5V278.5L766.5 280.5L763 282L762.5 281zM808 311L810 311L809.5 312.5V316.5L806.5 318.5L803 320L802.5 319zM960 174L962 174L961.5 175.5V179.5L958.5 181.5L955 183L954.5 182zM42.5 496L40.5 496L41.0 494.5V490.5L44.0 488.5L47.5 487L48.0 488zM98.5 451L96.5 451L97.0 449.5V445.5L100.0 443.5L103.5 442L104.0 443zM122.5 463L120.5 463L121.0 461.5V457.5L124.0 455.5L127.5 454L128.0 455zM194.5 405L192.5 405L193.0 403.5V399.5L196.0 397.5L199.5 396L200.0 397zM242.5 436L240.5 436L241.0 434.5V430.5L244.0 428.5L247.5 427L248.0 428zM306.5 463L304.5 463L305.0 461.5V457.5L308.0 455.5L311.5 454L312.0 455zM354.5 437L352.5 437L353.0 435.5V431.5L356.0 429.5L359.5 428L360.0 429zM418.5 435L416.5 435L417.0 433.5V429.5L420.0 427.5L423.5 426L424.0 427zM458.5 423L456.5 423L457.0 421.5V417.5L460.0 415.5L463.5 414L464.0 415zM506.5 386L504.5 386L505.0 384.5V380.5L508.0 378.5L511.5 377L512.0 378zM602.5 390L600.5 390L601.0 388.5V384.5L604.0 382.5L607.5 381L608.0 382zM634.5 397L632.5 397L633.0 395.5V391.5L636.0 389.5L639.5 388L640.0 389zM722.5 343L720.5 343L721.0 341.5V337.5L724.0 335.5L727.5 334L728.0 335zM818.5 394L816.5 394L817.0 392.5V388.5L820.0 386.5L823.5 385L824.0 386zM890.5 331L888.5 331L889.0 329.5V325.5L892.0 323.5L895.5 322L896.0 323zM970.5 238L968.5 238L969.0 236.5V232.5L972.0 230.5L975.5 229L976.0 230zM1010.5 184L1008.5 184L1009.0 182.5V178.5L1012.0 176.5L1015.5 175L1016.0 176z" fill="#ff0000" shape-rendering="auto"/>
</g>
<g clip-path="url(#cs)">
<line x1="864.7" y1="503.4" x2="1073.7" y2="521" stroke="#008000" stroke-width="2.2"/>
<polyline points="9.5,548.3 17.5,545.6 25.5,558.2 33.5,581 41.5,618.3 49.5,621.5 57.5,597 65.5,538 73.5,517.3 81.5,522 89.5,554 97.5,582 105.5,601 113.5,601 121.5,599 129.5,594.3 137.5,578.2 145.5,551.5 153.5,535.5 161.5,526 169.5,524.8 177.5,517.3 185.5,521.5 193.5,538 201.5,556.8 209.5,562.2 217.5,594.3 225.5,642.4 233.5,661 241.5,651.8 249.5,618.3 257.5,575 265.5,566.2 273.5,602.3 281.5,647.8 289.5,648.3 297.5,659.8 305.5,639.7 313.5,607.6 321.5,559.5 329.5,535 337.5,545.6 345.5,556.8 353.5,559 361.5,566.2 369.5,536.8 377.5,523.4 385.5,522.6 393.5,570.2 401.5,610.3 409.5,654.4 417.5,649 425.5,621 433.5,583.6 441.5,526 449.5,526 457.5,555.5 465.5,560.9 473.5,542 481.5,512.7 489.5,524.2 497.5,548.8 505.5,578.2 513.5,607.6 521.5,607.6 529.5,554.2 537.5,536.8 545.5,546.7 553.5,575.6 561.5,609 569.5,614.3 577.5,631.2 585.5,617.8 593.5,618.3 601.5,608.2 609.5,610.9 617.5,614.3 625.5,632 633.5,650.4 641.5,655.2 649.5,598.3 657.5,543.5 665.5,507.4 673.5,524.2 681.5,528.8 689.5,534.1 697.5,519.4 705.5,516.7 713.5,518.1 721.5,539.5 729.5,572.9 737.5,610.3 745.5,593 753.5,572.9 761.5,552.8 769.5,536.8 777.5,582.2 785.5,623.7 793.5,649.9 801.5,653.1 809.5,641 817.5,645 825.5,623.7 833.5,601 841.5,548.8 849.5,522.1 857.5,506 865.5,503.4 873.5,506.6 881.5,510 889.5,547.5 897.5,540.8 905.5,535.5 913.5,509.3 921.5,515.4 929.5,512.7 937.5,506.3 945.5,508 953.5,516 961.5,532.1 969.5,548.8 977.5,575.6 985.5,555.5 993.5,519.4 1001.5,509.8 1009.5,524.5 1017.5,524.5 1025.5,538.8" fill="none" stroke="#20b2aa" stroke-width="1"/>
<polyline points="9.5,590.3 17.5,562.2 25.5,552 33.5,563.5 41.5,589 49.5,607.6 57.5,611.7 65.5,589 73.5,548.8 81.5,526 89.5,531.4 97.5,554.2 105.5,578.2 113.5,594.3 121.5,599.6 129.5,598.3 137.5,591 145.5,575.6 153.5,555.5 161.5,538 169.5,527.4 177.5,522.6 185.5,521.5 193.5,524.8 201.5,539.5 209.5,550.2 217.5,571.5 225.5,602.3 233.5,631.7 241.5,651.8 249.5,642.4 257.5,609 265.5,583.6 273.5,581 281.5,605 289.5,631.7 297.5,651.8 305.5,649 313.5,631.7 321.5,607.6 329.5,566.2 337.5,546.1 345.5,544.8 353.5,552.8 361.5,560.9 369.5,552.8 377.5,542 385.5,527.4 393.5,539.5 401.5,572.9 409.5,614.3 417.5,639.7 425.5,642.4 433.5,619.7 441.5,581 449.5,546.7 457.5,536 465.5,548.3 473.5,552.8 481.5,538.1 489.5,526.1 497.5,528.8 505.5,548.8 513.5,578.2 521.5,599.1 529.5,589.5 537.5,568.9 545.5,546.7 553.5,552.8 561.5,579.6 569.5,599.6 577.5,618.3 585.5,620.5 593.5,622.4 601.5,613.5 609.5,612.5 617.5,611.7 625.5,620 633.5,631.7 641.5,644.5 649.5,637 657.5,606.3 665.5,554.2 673.5,527.4 681.5,520.7 689.5,529.6 697.5,527.4 705.5,523.4 713.5,518.9 721.5,526.1 729.5,544.8 737.5,575.6 745.5,591.6 753.5,593 761.5,574.2 769.5,555.5 777.5,555.5 785.5,578.2 793.5,621 801.5,642.4 809.5,647.8 817.5,647.2 825.5,635.7 833.5,622.4 841.5,594.3 849.5,554.2 857.5,524.8 865.5,510 873.5,504.7 881.5,507.4 889.5,522.1 897.5,534.1 905.5,541.3 913.5,527.4 921.5,518.9 929.5,512.7 937.5,512 945.5,509.4 953.5,511.4 961.5,520.1 969.5,530.1 977.5,552.2 985.5,558.9 993.5,550.2 1001.5,528.8 1009.5,518.3 1017.5,519.4 1025.5,528.8" fill="none" stroke="#ff0000" stroke-width="1"/>
</g>
<rect x="8.5" y="109.5" width="1231" height="382" fill="none" stroke="#000"/>
<rect x="8.5" y="493.5" width="1231" height="189" fill="none" stroke="#000"/>
<line x1="1240" y1="125.5" x2="1243" y2="125.5" stroke="#000" stroke-width="1" />
<text x="1245.7" y="128" font-size="9.5" fill="#000" textLength="31.4" lengthAdjust="spacingAndGlyphs" stroke="#000" stroke-width="0.2" >142.990</text>
<line x1="1240" y1="158.5" x2="1243" y2="158.5" stroke="#000" stroke-width="1" />
<text x="1245.7" y="161" font-size="9.5" fill="#000" textLength="31.4" lengthAdjust="spacingAndGlyphs" stroke="#000" stroke-width="0.2" >141.460</text>
<line x1="1240" y1="191.5" x2="1243" y2="191.5" stroke="#000" stroke-width="1" />
<text x="1245.7" y="194" font-size="9.5" fill="#000" textLength="31.4" lengthAdjust="spacingAndGlyphs" stroke="#000" stroke-width="0.2" >139.930</text>
<line x1="1240" y1="224.5" x2="1243" y2="224.5" stroke="#000" stroke-width="1" />
<text x="1245.7" y="227" font-size="9.5" fill="#000" textLength="31.4" lengthAdjust="spacingAndGlyphs" stroke="#000" stroke-width="0.2" >138.400</text>
<line x1="1240" y1="257.5" x2="1243" y2="257.5" stroke="#000" stroke-width="1" />
<text x="1245.7" y="260" font-size="9.5" fill="#000" textLength="31.4" lengthAdjust="spacingAndGlyphs" stroke="#000" stroke-width="0.2" >136.915</text>
<line x1="1240" y1="290.5" x2="1243" y2="290.5" stroke="#000" stroke-width="1" />
<text x="1245.7" y="293" font-size="9.5" fill="#000" textLength="31.4" lengthAdjust="spacingAndGlyphs" stroke="#000" stroke-width="0.2" >135.385</text>
<line x1="1240" y1="323.5" x2="1243" y2="323.5" stroke="#000" stroke-width="1" />
<text x="1245.7" y="326" font-size="9.5" fill="#000" textLength="31.4" lengthAdjust="spacingAndGlyphs" stroke="#000" stroke-width="0.2" >133.855</text>
<line x1="1240" y1="356.5" x2="1243" y2="356.5" stroke="#000" stroke-width="1" />
<text x="1245.7" y="359" font-size="9.5" fill="#000" textLength="31.4" lengthAdjust="spacingAndGlyphs" stroke="#000" stroke-width="0.2" >132.325</text>
<line x1="1240" y1="389.5" x2="1243" y2="389.5" stroke="#000" stroke-width="1" />
<text x="1245.7" y="392" font-size="9.5" fill="#000" textLength="31.4" lengthAdjust="spacingAndGlyphs" stroke="#000" stroke-width="0.2" >130.840</text>
<line x1="1240" y1="422.5" x2="1243" y2="422.5" stroke="#000" stroke-width="1" />
<text x="1245.7" y="425" font-size="9.5" fill="#000" textLength="31.4" lengthAdjust="spacingAndGlyphs" stroke="#000" stroke-width="0.2" >129.310</text>
<line x1="1240" y1="455.5" x2="1243" y2="455.5" stroke="#000" stroke-width="1" />
<text x="1245.7" y="458" font-size="9.5" fill="#000" textLength="31.4" lengthAdjust="spacingAndGlyphs" stroke="#000" stroke-width="0.2" >127.780</text>
<line x1="1240" y1="488.5" x2="1243" y2="488.5" stroke="#000" stroke-width="1" />
<text x="1245.7" y="491" font-size="9.5" fill="#000" textLength="31.4" lengthAdjust="spacingAndGlyphs" stroke="#000" stroke-width="0.2" >126.295</text>
<rect x="1242" y="145" width="39" height="11" fill="#000" />
<text x="1245.7" y="154.5" font-size="9.5" fill="#fff" textLength="31.4" lengthAdjust="spacingAndGlyphs" stroke="#fff" stroke-width="0.2" >141.755</text>
<line x1="1240" y1="495.5" x2="1243" y2="495.5" stroke="#000" stroke-width="1" />
<text x="1243.6" y="504" font-size="9" fill="#000" textLength="13.4" lengthAdjust="spacingAndGlyphs" stroke="#000" stroke-width="0.2" >100</text>
<text x="1242" y="679.5" font-size="9" fill="#000" textLength="5" lengthAdjust="spacingAndGlyphs" stroke="#000" stroke-width="0.2" >0</text>
<rect x="12" y="112" width="221" height="10" fill="#fff" />
<path d="M12 114.5 h8 l-4 6 z" fill="#000"/>
<text x="17" y="120.6" font-size="9" fill="#000" textLength="6" lengthAdjust="spacingAndGlyphs" stroke="#000" stroke-width="0.2" >#</text>
<text x="23.8" y="120.6" font-size="9" fill="#000" textLength="58.7" lengthAdjust="spacingAndGlyphs" stroke="#000" stroke-width="0.2" >EURJPY,Daily</text>
<text x="90.5" y="120.6" font-size="9" fill="#000" textLength="139.3" lengthAdjust="spacingAndGlyphs" stroke="#000" stroke-width="0.2" >142.145 142.820 141.415 141.755</text>
<rect x="9" y="145" width="80" height="7" fill="#fff" />
<text x="15.9" y="151.8" font-size="9" fill="#000" textLength="72.2" lengthAdjust="spacingAndGlyphs" stroke="#000" stroke-width="0.2" >#874832 sell 0.20</text>
<rect x="9" y="150" width="53" height="8" fill="#fff" />
<text x="15.5" y="157.4" font-size="9" fill="#000" textLength="46.5" lengthAdjust="spacingAndGlyphs" stroke="#000" stroke-width="0.2" >#874832 tp</text>
<text x="991.3" y="240" font-size="19.5" fill="#0000d8" textLength="245" lengthAdjust="spacingAndGlyphs" stroke="#0000d8" stroke-width="0.45">хотя бы мувинг протестиров</text>
<text x="12.8" y="505.7" font-size="9" fill="#000" textLength="112.9" lengthAdjust="spacingAndGlyphs" stroke="#000" stroke-width="0.2" >Sto(5,3,3) 78.2428 81.6084</text>
<line x1="9.5" y1="683" x2="9.5" y2="687" stroke="#000" stroke-width="1" />
<text x="7.3" y="696.3" font-size="9.5" fill="#000" textLength="50.1" lengthAdjust="spacingAndGlyphs" stroke="#000" stroke-width="0.2" >20 Jun 2013</text>
<line x1="73.5" y1="683" x2="73.5" y2="687" stroke="#000" stroke-width="1" />
<text x="71.3" y="696.3" font-size="9.5" fill="#000" textLength="42.0" lengthAdjust="spacingAndGlyphs" stroke="#000" stroke-width="0.2" >2 Jul 2013</text>
<line x1="137.5" y1="683" x2="137.5" y2="687" stroke="#000" stroke-width="1" />
<text x="135.3" y="696.3" font-size="9.5" fill="#000" textLength="47.1" lengthAdjust="spacingAndGlyphs" stroke="#000" stroke-width="0.2" >12 Jul 2013</text>
<line x1="201.5" y1="683" x2="201.5" y2="687" stroke="#000" stroke-width="1" />
<text x="199.3" y="696.3" font-size="9.5" fill="#000" textLength="47.1" lengthAdjust="spacingAndGlyphs" stroke="#000" stroke-width="0.2" >24 Jul 2013</text>
<line x1="265.5" y1="683" x2="265.5" y2="687" stroke="#000" stroke-width="1" />
<text x="263.3" y="696.3" font-size="9.5" fill="#000" textLength="46.0" lengthAdjust="spacingAndGlyphs" stroke="#000" stroke-width="0.2" >5 Aug 2013</text>
<line x1="329.5" y1="683" x2="329.5" y2="687" stroke="#000" stroke-width="1" />
<text x="327.3" y="696.3" font-size="9.5" fill="#000" textLength="51.1" lengthAdjust="spacingAndGlyphs" stroke="#000" stroke-width="0.2" >15 Aug 2013</text>
<line x1="393.5" y1="683" x2="393.5" y2="687" stroke="#000" stroke-width="1" />
<text x="391.3" y="696.3" font-size="9.5" fill="#000" textLength="51.1" lengthAdjust="spacingAndGlyphs" stroke="#000" stroke-width="0.2" >27 Aug 2013</text>
<line x1="457.5" y1="683" x2="457.5" y2="687" stroke="#000" stroke-width="1" />
<text x="455.3" y="696.3" font-size="9.5" fill="#000" textLength="46.5" lengthAdjust="spacingAndGlyphs" stroke="#000" stroke-width="0.2" >6 Sep 2013</text>
<line x1="521.5" y1="683" x2="521.5" y2="687" stroke="#000" stroke-width="1" />
<text x="519.3" y="696.3" font-size="9.5" fill="#000" textLength="51.6" lengthAdjust="spacingAndGlyphs" stroke="#000" stroke-width="0.2" >18 Sep 2013</text>
<line x1="585.5" y1="683" x2="585.5" y2="687" stroke="#000" stroke-width="1" />
<text x="583.3" y="696.3" font-size="9.5" fill="#000" textLength="51.6" lengthAdjust="spacingAndGlyphs" stroke="#000" stroke-width="0.2" >30 Sep 2013</text>
<line x1="649.5" y1="683" x2="649.5" y2="687" stroke="#000" stroke-width="1" />
<text x="647.3" y="696.3" font-size="9.5" fill="#000" textLength="49.6" lengthAdjust="spacingAndGlyphs" stroke="#000" stroke-width="0.2" >10 Oct 2013</text>
<line x1="713.5" y1="683" x2="713.5" y2="687" stroke="#000" stroke-width="1" />
<text x="711.3" y="696.3" font-size="9.5" fill="#000" textLength="49.6" lengthAdjust="spacingAndGlyphs" stroke="#000" stroke-width="0.2" >22 Oct 2013</text>
<line x1="777.5" y1="683" x2="777.5" y2="687" stroke="#000" stroke-width="1" />
<text x="775.3" y="696.3" font-size="9.5" fill="#000" textLength="49.6" lengthAdjust="spacingAndGlyphs" stroke="#000" stroke-width="0.2" >31 Oct 2013</text>
<line x1="841.5" y1="683" x2="841.5" y2="687" stroke="#000" stroke-width="1" />
<text x="839.3" y="696.3" font-size="9.5" fill="#000" textLength="51.6" lengthAdjust="spacingAndGlyphs" stroke="#000" stroke-width="0.2" >12 Nov 2013</text>
<line x1="905.5" y1="683" x2="905.5" y2="687" stroke="#000" stroke-width="1" />
<text x="903.3" y="696.3" font-size="9.5" fill="#000" textLength="51.6" lengthAdjust="spacingAndGlyphs" stroke="#000" stroke-width="0.2" >22 Nov 2013</text>
<line x1="969.5" y1="683" x2="969.5" y2="687" stroke="#000" stroke-width="1" />
<text x="967.3" y="696.3" font-size="9.5" fill="#000" textLength="46.5" lengthAdjust="spacingAndGlyphs" stroke="#000" stroke-width="0.2" >4 Dec 2013</text>
<rect x="6" y="701" width="1276" height="1" fill="#eeeeee" />
<line x1="4" y1="703.5" x2="1284" y2="703.5" stroke="#000" stroke-width="1" />
<rect x="4" y="704" width="1278" height="19" fill="#dfdfdf" />
<rect x="4" y="704" width="2" height="19" fill="#8c8c8c" />
<path d="M340.5 703 V721.5 H427.5 V703" fill="#fff" stroke="#000"/>
<text x="17" y="716" font-size="11" fill="#707068" textLength="67" lengthAdjust="spacingAndGlyphs" >EURUSD,Daily</text>
<text x="106.7" y="716" font-size="11" fill="#707068" textLength="56.4" lengthAdjust="spacingAndGlyphs" >USDCHF,H4</text>
<text x="186.2" y="716" font-size="11" fill="#707068" textLength="65.8" lengthAdjust="spacingAndGlyphs" >GBPUSD,Daily</text>
<text x="274.5" y="716" font-size="11" fill="#707068" textLength="53.5" lengthAdjust="spacingAndGlyphs" >USDJPY,H4</text>
<text x="351.3" y="716" font-size="11" fill="#000" textLength="63.9" lengthAdjust="spacingAndGlyphs" >EURJPY,Daily</text>
<text x="439" y="716" font-size="11" fill="#707068" textLength="68.5" lengthAdjust="spacingAndGlyphs" >AUDNZD,Daily</text>
<text x="530.4" y="716" font-size="11" fill="#707068" textLength="58" lengthAdjust="spacingAndGlyphs" >USDCAD,H4</text>
<text x="609.7" y="716" font-size="11" fill="#707068" textLength="57.1" lengthAdjust="spacingAndGlyphs" >NZDUSD,H4</text>
<text x="692" y="716" font-size="11" fill="#707068" textLength="67.2" lengthAdjust="spacingAndGlyphs" >AUDUSD,Daily</text>
<text x="782.5" y="716" font-size="11" fill="#707068" textLength="56.2" lengthAdjust="spacingAndGlyphs" >XAUUSD,H4</text>
<text x="864" y="716" font-size="11" fill="#707068" textLength="54.3" lengthAdjust="spacingAndGlyphs" >GBPCHF,H1</text>
<text x="942.4" y="716" font-size="11" fill="#707068" textLength="52.8" lengthAdjust="spacingAndGlyphs" >GBPJPY,H4</text>
<text x="1018" y="716" font-size="11" fill="#707068" textLength="56.4" lengthAdjust="spacingAndGlyphs" >EURCHF,H4</text>
<text x="1098.5" y="716" font-size="11" fill="#707068" textLength="65.4" lengthAdjust="spacingAndGlyphs" >EURGBP,Daily</text>
<rect x="96" y="706" width="1" height="13" fill="#8a8a82" />
<rect x="176" y="706" width="1" height="13" fill="#8a8a82" />
<rect x="264" y="706" width="1" height="13" fill="#8a8a82" />
<rect x="520" y="706" width="1" height="13" fill="#8a8a82" />
<rect x="600" y="706" width="1" height="13" fill="#8a8a82" />
<rect x="680" y="706" width="1" height="13" fill="#8a8a82" />
<rect x="772" y="706" width="1" height="13" fill="#8a8a82" />
<rect x="852" y="706" width="1" height="13" fill="#8a8a82" />
<rect x="932" y="706" width="1" height="13" fill="#8a8a82" />
<rect x="1008" y="706" width="1" height="13" fill="#8a8a82" />
<rect x="1088" y="706" width="1" height="13" fill="#8a8a82" />
<rect x="1176" y="706" width="1" height="13" fill="#8a8a82" />
<path d="M1255 713.5 l3.5 -4 v8 z M1276 713.5 l-3.5 -4 v8 z" fill="#a0a0a0"/>
<line x1="4" y1="723.5" x2="1284" y2="723.5" stroke="#fafafa" stroke-width="1" />
<rect x="4" y="724" width="1280" height="20" fill="#dfdfdf" />
<text x="6" y="739" font-size="11" fill="#000" textLength="128" lengthAdjust="spacingAndGlyphs" >Для справки, нажмите F1</text>
<text x="568.3" y="739" font-size="11" fill="#000" textLength="34.7" lengthAdjust="spacingAndGlyphs" >Default</text>
<rect x="563" y="726" width="1" height="17" fill="#a0a0a0" />
<rect x="564" y="726" width="1" height="17" fill="#fafafa" />
<rect x="672" y="726" width="1" height="17" fill="#a0a0a0" />
<rect x="673" y="726" width="1" height="17" fill="#fafafa" />
<rect x="773" y="726" width="1" height="17" fill="#a0a0a0" />
<rect x="774" y="726" width="1" height="17" fill="#fafafa" />
<rect x="845" y="726" width="1" height="17" fill="#a0a0a0" />
<rect x="846" y="726" width="1" height="17" fill="#fafafa" />
<rect x="916" y="726" width="1" height="17" fill="#a0a0a0" />
<rect x="917" y="726" width="1" height="17" fill="#fafafa" />
<rect x="985" y="726" width="1" height="17" fill="#a0a0a0" />
<rect x="986" y="726" width="1" height="17" fill="#fafafa" />
<rect x="1057" y="726" width="1" height="17" fill="#a0a0a0" />
<rect x="1058" y="726" width="1" height="17" fill="#fafafa" />
<rect x="1122" y="726" width="1" height="17" fill="#a0a0a0" />
<rect x="1123" y="726" width="1" height="17" fill="#fafafa" />
<rect x="1128.0" y="729" width="2" height="6" fill="#5a8a10" />
<rect x="1128.0" y="739.0" width="2" height="2.0" fill="#a81010" />
<rect x="1131.3" y="729" width="2" height="6" fill="#5a8a10" />
<rect x="1131.3" y="738.0" width="2" height="3.0" fill="#a81010" />
<rect x="1134.6" y="729" width="2" height="6" fill="#5a8a10" />
<rect x="1134.6" y="737.0" width="2" height="4.0" fill="#a81010" />
<rect x="1137.9" y="729" width="2" height="6" fill="#5a8a10" />
<rect x="1137.9" y="736.0" width="2" height="5.0" fill="#a81010" />
<rect x="1141.2" y="729" width="2" height="6" fill="#5a8a10" />
<rect x="1141.2" y="735.0" width="2" height="6.0" fill="#a81010" />
<rect x="1144.5" y="729" width="2" height="6" fill="#5a8a10" />
<rect x="1144.5" y="734.0" width="2" height="7.0" fill="#a81010" />
<rect x="1147.8" y="729" width="2" height="6" fill="#5a8a10" />
<rect x="1147.8" y="733.0" width="2" height="8.0" fill="#a81010" />
<text x="1182.3" y="739" font-size="11" fill="#000" textLength="35.1" lengthAdjust="spacingAndGlyphs" >14/0 kb</text>
<path d="M1270 743 L1283 730 M1274 743 L1283 734 M1278 743 L1283 738" stroke="#8a8a8a" stroke-width="1.2"/>
<rect x="4" y="744" width="1280" height="4" fill="#858585" />
<rect x="4" y="744" width="1280" height="1" fill="#555555" />
<path d="M4 744 H44 L46 748 H4 z" fill="#f0902a"/>
<rect x="4" y="744" width="41" height="1" fill="#b85a10" />
</svg></body></html>
